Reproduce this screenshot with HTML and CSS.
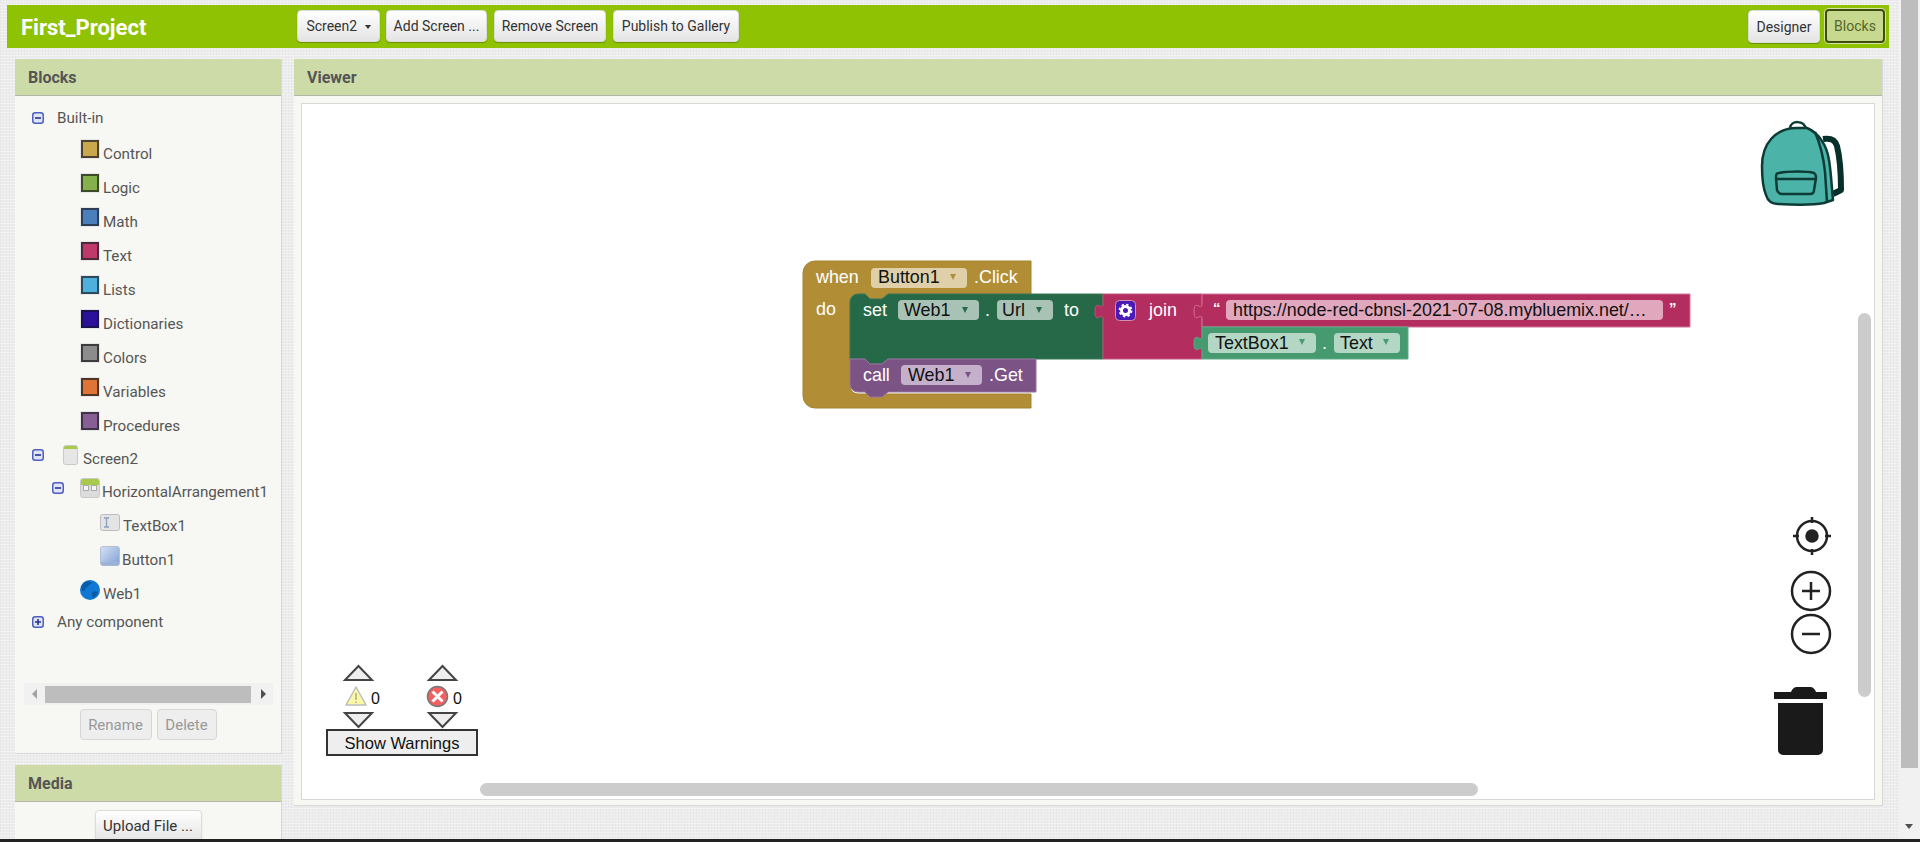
FILE: index.html
```html
<!DOCTYPE html>
<html>

<head>
	<title>First_Project - Blocks</title>
	<link rel="stylesheet" href="styles.css">
</head>

<body>
	<svg class="defs">
		<symbol id="minus" viewBox="0 0 12 12">
			<rect x="0.75" y="0.75" width="10.5" height="10.5" rx="2.5" fill="#dfe4f7" stroke="#4f5fc0" stroke-width="1.5" />
			<path d="M3 6h6" stroke="#27328f" stroke-width="1.6" />
		</symbol>
		<symbol id="plus" viewBox="0 0 12 12">
			<rect x="0.75" y="0.75" width="10.5" height="10.5" rx="2.5" fill="#dfe4f7" stroke="#4f5fc0" stroke-width="1.5" />
			<path d="M3 6h6M6 3v6" stroke="#27328f" stroke-width="1.6" />
		</symbol>
	</svg>

	<div class="window">
		<div class="page">
			<div class="topbar">
				<div class="project">First_Project</div>
				<div class="toolbar">
					<button class="btn btn-screen">Screen2 <span class="caret"></span></button>
					<button class="btn btn-add">Add Screen ...</button>
					<button class="btn btn-remove">Remove Screen</button>
					<button class="btn btn-publish">Publish to Gallery</button>
				</div>
				<div class="views">
					<button class="btn btn-designer">Designer</button>
					<button class="btn btn-active">Blocks</button>
				</div>
			</div>

			<div class="columns">
				<div class="sidebar">
					<div class="panel blocks-panel">
						<div class="panel-head">Blocks</div>
						<div class="tree">
							<div class="row row-builtin"><svg class="toggle"><use href="#minus" /></svg><span class="root-label">Built-in</span></div>
							<div class="row row-drawer"><span class="swatch control"></span>Control</div>
							<div class="row row-drawer"><span class="swatch logic"></span>Logic</div>
							<div class="row row-drawer"><span class="swatch math"></span>Math</div>
							<div class="row row-drawer"><span class="swatch text"></span>Text</div>
							<div class="row row-drawer"><span class="swatch lists"></span>Lists</div>
							<div class="row row-drawer"><span class="swatch dicts"></span>Dictionaries</div>
							<div class="row row-drawer"><span class="swatch colors"></span>Colors</div>
							<div class="row row-drawer"><span class="swatch vars"></span>Variables</div>
							<div class="row row-drawer"><span class="swatch procs"></span>Procedures</div>
							<div class="row row-screen">
								<svg class="toggle"><use href="#minus" /></svg>
								<svg class="icon icon-screen" viewBox="0 0 15 20">
									<rect x="0.5" y="0.5" width="14" height="19" rx="2" fill="#e6e6e6" stroke="#c9c9c9" />
									<path d="M1 4V2.5a1.5 1.5 0 0 1 1.500-1.500h10a1.500 1.500 0 0 1 1.500 1.500V4z" fill="#a9c94a" />
								</svg>
								Screen2
							</div>
							<div class="row row-arrange">
								<svg class="toggle"><use href="#minus" /></svg>
								<svg class="icon" viewBox="0 0 20 20">
									<rect x="0.5" y="0.5" width="19" height="19" rx="2.500" fill="#dcdcdc" stroke="#c9c9c9" />
									<path d="M1 7V3a2 2 0 0 1 2-2h14a2 2 0 0 1 2 2v4z" fill="#a9c94a" />
									<rect x="3.500" y="7.500" width="5" height="5" fill="#f4f4f4" stroke="#aaa" />
									<rect x="11.500" y="7.500" width="5" height="5" fill="#f4f4f4" stroke="#aaa" />
								</svg>
								HorizontalArrangement1
							</div>
							<div class="row row-child">
								<svg class="icon icon-textbox" viewBox="0 0 20 17">
									<rect x="0.5" y="0.5" width="19" height="16" rx="2" fill="#e4e4e4" stroke="#bdbdbd" />
									<path d="M4 4h5M4 13h5M6.500 4v9" fill="none" stroke="#8b9dc0" stroke-width="1.300" />
								</svg>
								TextBox1
							</div>
							<div class="row row-child">
								<svg class="icon" viewBox="0 0 20 20">
									<defs>
										<linearGradient id="btnfill" x1="0" y1="0" x2="1" y2="1">
											<stop offset="0" stop-color="#d6e2f6" />
											<stop offset="1" stop-color="#7e9fd3" />
										</linearGradient>
									</defs>
									<rect x="0.5" y="0.5" width="19" height="19" rx="2.500" fill="url(#btnfill)" stroke="#b3bfd2" />
									<path d="M1 16h18v1.500a2 2 0 0 1-2 2H3a2 2 0 0 1-2-2z" fill="#9db2d6" />
								</svg>
								Button1
							</div>
							<div class="row row-web">
								<svg class="icon" viewBox="0 0 20 20">
									<circle cx="10" cy="10" r="10" fill="#0f78d2" />
									<path d="M4 2.500c3-1.500 6-1.500 8 0-1 2-3 2-4 4-1 1-3 1-3 3s-2 1-3 1c-1-3 0-6 2-8zM12 12c2-1 4-1 6 0-1 3-3 5-5 6-1-1-1-4-1-6z" fill="#0a5aa8" />
								</svg>
								Web1
							</div>
							<div class="row row-any"><svg class="toggle"><use href="#plus" /></svg><span class="root-label">Any component</span></div>
						</div>
						<div class="hscroll">
							<span class="arrow-left"></span>
							<span class="hscroll-thumb"></span>
							<span class="arrow-right"></span>
						</div>
						<div class="panel-actions">
							<button class="btn btn-off btn-rename">Rename</button>
							<button class="btn btn-off btn-delete">Delete</button>
						</div>
					</div>

					<div class="panel media-panel">
						<div class="panel-head">Media</div>
						<div class="media-body">
							<button class="btn btn-upload">Upload File ...</button>
						</div>
					</div>
				</div>

				<div class="panel viewer-panel">
					<div class="panel-head">Viewer</div>
					<div class="viewer-body">
						<svg class="workspace" viewBox="302 104 1572 695">
							<!-- when Button1.Click -->
							<path class="blk gold" d="M803 273a12 12 0 0 1 12-12H1031V294H888l-6 5h-12l-5-5H858a8 8 0 0 0-8 8V386a8 8 0 0 0 8 8H1031V408H815a12 12 0 0 1-12-12z" />
							<rect class="field" x="871" y="268" width="96" height="20" rx="4" fill="#dfd0a9" />
							<text class="lbl" x="816" y="283">when</text>
							<text class="val" x="878" y="283">Button1</text>
							<path d="M950 274h6l-3 6z" fill="#b18e35" />
							<text class="lbl" x="974" y="283">.Click</text>
							<text class="lbl" x="816" y="315">do</text>

							<!-- set Web1.Url to -->
							<path class="blk green" d="M858 294H865l5 5h12l6-5H1103V359H888l-6 5h-12l-5-5H850V302a8 8 0 0 1 8-8z" />
							<text class="lbl" x="863" y="316">set</text>
							<rect class="field" x="898" y="300" width="81" height="20" rx="4" fill="#a8c3b5" />
							<text class="val" x="904" y="316">Web1</text>
							<path d="M962 307h6l-3 6z" fill="#266948" />
							<text class="lbl" x="985" y="316">.</text>
							<rect class="field" x="997" y="300" width="56" height="20" rx="4" fill="#a8c3b5" />
							<text class="val" x="1002" y="316">Url</text>
							<path d="M1036 307h6l-3 6z" fill="#266948" />
							<text class="lbl" x="1064" y="316">to</text>

							<!-- call Web1.Get -->
							<path class="blk purple" d="M850 359H865l5 5h12l6-5H1036V392H888l-6 5h-12l-5-5H858a8 8 0 0 1-8-8z" />
							<text class="lbl" x="863" y="381">call</text>
							<rect class="field" x="901" y="365" width="81" height="20" rx="4" fill="#c4b0ca" />
							<text class="val" x="908" y="381">Web1</text>
							<path d="M965 372h6l-3 6z" fill="#7c5385" />
							<text class="lbl" x="989" y="381">.Get</text>

							<!-- join -->
							<path class="blk pink" d="M1103 294H1202V359H1103V319c0-8-8 6-8-7.500s8 .5 8-7.500z" />
							<rect x="1115.500" y="300.500" width="20" height="20" rx="4" fill="#4a19b8" stroke="#d58fb0" />
							<circle cx="1125.500" cy="310.500" r="4" fill="none" stroke="#fff" stroke-width="3" />
							<circle cx="1125.500" cy="310.500" r="6" fill="none" stroke="#fff" stroke-width="1.800" stroke-dasharray="2.400 2.300" />
							<text class="lbl" x="1149" y="316">join</text>

							<!-- text string -->
							<path class="blk pink-text" d="M1202 294H1690V327H1202V319c0-8-8 6-8-7.500s8 .5 8-7.500z" />
							<text class="quote" x="1213" y="313">“</text>
							<rect class="field" x="1226" y="300" width="437" height="20" rx="4" fill="#e0a7bd" />
							<text class="val" x="1233" y="316">https://node-red-cbnsl-2021-07-08.mybluemix.net/…</text>
							<text class="quote" x="1669" y="313">”</text>

							<!-- TextBox1.Text -->
							<path class="blk teal" d="M1202 327H1408V359H1202V351c0-8-8 6-8-7.500s8 .5 8-7.500z" />
							<rect class="field" x="1208" y="333" width="108" height="20" rx="4" fill="#b4d6c5" />
							<text class="val" x="1215" y="349">TextBox1</text>
							<path d="M1299 339h6l-3 6z" fill="#459a6f" />
							<text class="lbl" x="1322" y="349">.</text>
							<rect class="field" x="1334" y="333" width="66" height="20" rx="4" fill="#b4d6c5" />
							<text class="val" x="1340" y="349">Text</text>
							<path d="M1383 339h6l-3 6z" fill="#459a6f" />

							<!-- warnings -->
							<g class="tri">
								<path d="M345 680l13.500-14 13.500 14z" />
								<path d="M429 680l13.500-14 13.500 14z" />
								<path d="M345 713l13.500 14 13.500-14z" />
								<path d="M429 713l13.500 14 13.500-14z" />
							</g>
							<path d="M356 687l10 18h-20z" fill="#fbf9a6" stroke="#bdbdbd" stroke-width="1.500" stroke-linejoin="round" />
							<path d="M356 693v7M356 701.500v1.500" stroke="#a3a37a" stroke-width="1.300" />
							<text class="count" x="371" y="704">0</text>
							<circle cx="437.500" cy="696.500" r="10" fill="#f46060" stroke="#777" stroke-width="1.500" />
							<path d="M432.500 691.500l10 10M442.500 691.500l-10 10" stroke="#fff" stroke-width="3" />
							<text class="count" x="453" y="704">0</text>
							<rect x="327" y="730" width="150" height="25" fill="#eee" stroke="#333" stroke-width="2" />
							<text class="warn-label" x="402" y="749">Show Warnings</text>

							<!-- backpack -->
							<g class="pack">
								<path class="pack-strap" d="M1823 139c7-1 12 0 14 7 3 12 4 30 4 44l-8 4" />
								<path class="pack-loop" d="M1790 128c1-8 14-8 16 1" />
								<path class="pack-body" d="M1797 128c-22 0-35 16-35 38 0 12 1 22 4 29 2 7 6 9 12 9 18 1 36 1 46-1l9-3c-1-10-2-28-4-40-2-14-10-27-22-32z" />
								<path class="pack-line" d="M1815 132c6 14 9 30 10 40l2 30" />
								<path class="pack-pocket" d="M1779 173c10-2 28-2 35 0 2 1 2 3 2 5l-2 12c0 3-2 4-4 4h-28c-3 0-4-1-5-4l-1-12c0-3 0-5 3-5zM1777 179h39" />
							</g>

							<!-- zoom controls -->
							<g class="ctrl">
								<circle cx="1812" cy="536" r="15" />
								<path d="M1812 517v6M1812 549v6M1793 536h6M1825 536h6" />
								<circle class="ctrl-dot" cx="1812" cy="536" r="5.500" />
								<circle cx="1811" cy="591" r="19" />
								<path d="M1802 591h18M1811 582v18" />
								<circle cx="1811" cy="634" r="19" />
								<path d="M1802 634h18" />
							</g>
							<path class="trash" d="M1774 692h17c1-3 3-5 6-5h13c3 0 5 2 6 5h11v7h-53zM1778 703h45v47a5 5 0 0 1-5 5h-35a5 5 0 0 1-5-5z" />

							<!-- scrollbars -->
							<rect class="ws-bar" x="1858" y="313" width="13" height="384" rx="6.500" />
							<rect class="ws-bar" x="480" y="783" width="998" height="13" rx="6.500" />
						</svg>
					</div>
				</div>
			</div>
		</div>

		<div class="vscroll">
			<div class="vscroll-thumb"></div>
			<div class="vscroll-arrow"></div>
		</div>
	</div>
	<div class="taskbar"></div>
</body>

</html>
```

FILE: styles.css
```css
* {
	box-sizing: border-box;
}

html,
body {
	margin: 0;
	height: 842px;
	overflow: hidden;
}

body {
	font-family: Roboto, "Liberation Sans", sans-serif;
	font-size: 14px;
	color: #555;
	background-color: #ececec;
}

.defs {
	display: none;
}

.window {
	display: flex;
	height: 839px;
	overflow: hidden;
}

.taskbar {
	height: 3px;
	background: #222;
}

.page {
	width: 1899px;
	padding: 5px 10px 0 7px;
	background-color: #ececec;
	background-image:
		repeating-linear-gradient(0deg, rgba(255, 255, 255, 0.35) 0 1px, transparent 1px 3px),
		repeating-linear-gradient(90deg, rgba(0, 0, 0, 0.025) 0 1px, transparent 1px 3px);
}

/* top bar */
.topbar {
	display: flex;
	align-items: center;
	height: 43px;
	padding: 2px 4px 0 14px;
	background-color: #8fc202;
}

.project {
	width: 276px;
	font-size: 22px;
	font-weight: 700;
	color: #fff;
}

.toolbar {
	display: flex;
	gap: 7px;
	margin-top: -3px;
}

.views {
	display: flex;
	align-items: flex-end;
	gap: 5px;
	margin-left: auto;
	margin-top: -3px;
}

.btn {
	height: 32px;
	padding: 0;
	font-family: Roboto, "Liberation Sans", sans-serif;
	font-size: 14px;
	color: #333;
	background: linear-gradient(#fff, #e4e4e4);
	border: 1px solid #dcdcdc;
	border-radius: 4px;
	box-shadow: 0 1px 1px rgba(0, 0, 0, 0.25);
}

.btn-screen {
	width: 83px;
	margin-right: -1px;
}

.btn-add {
	width: 101px;
}

.btn-remove {
	width: 112px;
}

.btn-publish {
	width: 126px;
}

.btn-designer {
	width: 72px;
	height: 33px;
}

.btn-active {
	width: 60px;
	height: 34px;
	color: #55662a;
	background: #c7d98f;
	border: 2px solid #3f4f0b;
	box-shadow: 0 0 0 1px #d6e3a8;
}

.caret {
	display: inline-block;
	margin-left: 4px;
	vertical-align: 2px;
	border-left: 3px solid transparent;
	border-right: 3px solid transparent;
	border-top: 4px solid #333;
}

/* panels */
.columns {
	display: flex;
	gap: 12px;
	margin: 11px 7px 0 0;
	padding-left: 8px;
}

.sidebar {
	display: flex;
	flex-direction: column;
	gap: 11px;
	width: 267px;
	flex: none;
}

.panel {
	background: #f7f8f3;
	border-right: 1px solid #d8d8d8;
	border-bottom: 1px solid #d8d8d8;
}

.panel-head {
	height: 37px;
	padding-left: 13px;
	font-size: 16px;
	font-weight: 700;
	line-height: 38px;
	color: #555;
	background: #ccdba8;
	border-bottom: 1px solid #b4b4a8;
}

.blocks-panel {
	height: 695px;
}

/* component tree */
.tree {
	height: 587px;
	padding-top: 5px;
	font-size: 15.2px;
}

.row {
	display: flex;
	align-items: center;
	height: 34px;
}

.row-builtin {
	margin-bottom: 1px;
}

.row-drawer {
	padding: 2px 0 0 66px;
}

.row-screen {
	padding-left: 17px;
}

.row-arrange {
	margin-top: -1px;
	padding-left: 37px;
}

.row-child {
	padding-left: 85px;
}

.row-web {
	padding-left: 65px;
}

.row-any {
	height: 26px;
	margin-top: -2px;
}

.toggle {
	width: 12px;
	height: 12px;
	flex: none;
	margin-left: 17px;
}

.row-screen .toggle,
.row-arrange .toggle {
	margin: 0 0 8px;
}

.root-label {
	margin-left: 13px;
}

.swatch {
	width: 18px;
	height: 18px;
	flex: none;
	margin: 0 4px 10px 0;
	border: 2px solid #3b3b3b;
	outline: 1px solid #e6e6e6;
}

.control { background: #c9a74d; border-color: #4a4130; }
.logic { background: #84b14c; border-color: #3c4a2a; }
.math { background: #4a7fbc; border-color: #2c3e55; }
.text { background: #c0396b; border-color: #4a2a3a; }
.lists { background: #4eb0dc; border-color: #2b4a5c; }
.dicts { background: #2b119a; border-color: #1c1450; }
.colors { background: #8c8c8c; border-color: #3c3c3c; }
.vars { background: #df7436; border-color: #4e3526; }
.procs { background: #875f95; border-color: #3f3146; }

.icon {
	width: 20px;
	height: 20px;
	flex: none;
	margin: 0 2px 8px 0;
}

.row-screen .icon {
	width: 15px;
	margin: 0 5px 8px 19px;
}

.row-arrange .icon {
	margin-left: 16px;
}

.icon-textbox {
	height: 17px;
	margin-right: 3px;
}

.row-web .icon {
	margin-right: 3px;
}

.hscroll {
	display: flex;
	align-items: center;
	height: 22px;
	margin: 0 8px 0 9px;
	background: #f1f1f1;
}

.hscroll-thumb {
	width: 206px;
	height: 17px;
	background: #bdbdbd;
}

.arrow-left,
.arrow-right {
	width: 0;
	height: 0;
	border-top: 5px solid transparent;
	border-bottom: 5px solid transparent;
}

.arrow-left {
	margin: 0 8px 0 8px;
	border-right: 5px solid #a3a3a3;
}

.arrow-right {
	margin-left: 10px;
	border-left: 5px solid #505050;
}

.panel-actions {
	display: flex;
	justify-content: center;
	gap: 5px;
	margin-top: 4px;
}

.btn-off {
	height: 31px;
	font-size: 15px;
	color: #999;
	background: #eee;
	border: 1px solid #d6d6d6;
	box-shadow: none;
}

.btn-rename {
	width: 72px;
}

.btn-delete {
	width: 60px;
}

.media-panel {
	height: 120px;
}

.media-body {
	display: flex;
	justify-content: center;
	padding-top: 8px;
}

.btn-upload {
	width: 107px;
	font-size: 15px;
}

/* viewer */
.viewer-panel {
	flex: 1;
	height: 747px;
}

.viewer-body {
	padding: 8px;
}

.workspace {
	display: block;
	width: 1572px;
	height: 695px;
	background: #fff;
	outline: 1px solid #d8d8d8;
}

.blk {
	stroke-width: 1;
}

.gold { fill: #b18e35; stroke: #a58330; }
.green { fill: #266948; stroke: #3b7858; }
.purple { fill: #7c5385; stroke: #96749d; }
.pink { fill: #b32d5e; stroke: #c2527a; }
.pink-text { fill: #b32d5e; stroke: #d2749a; }
.teal { fill: #459a6f; stroke: #5fa985; }

.workspace text {
	font-family: "Liberation Sans", Arial, sans-serif;
	font-size: 17.9px;
}

.workspace .lbl {
	fill: #fff;
}

.workspace .val {
	fill: #111;
}

.workspace .quote {
	font-size: 15px;
	font-weight: 700;
	fill: #fff;
}

.workspace .count {
	font-size: 16px;
	fill: #111;
}

.workspace .warn-label {
	font-size: 16.5px;
	text-anchor: middle;
	fill: #111;
}

.tri path {
	fill: #eee;
	stroke: #444;
	stroke-width: 2;
}

.pack path {
	fill: none;
	stroke: #0d3b36;
	stroke-width: 2.500;
	stroke-linejoin: round;
}

.pack .pack-body {
	fill: #4bb3a7;
}

.pack .pack-strap {
	stroke: #08302b;
	stroke-width: 6;
}

.ctrl circle {
	fill: #fff;
	stroke: #222;
	stroke-width: 2.500;
}

.ctrl path {
	fill: none;
	stroke: #222;
	stroke-width: 2.500;
}

.ctrl .ctrl-dot {
	fill: #222;
}

.trash {
	fill: #1a1a1a;
}

.ws-bar {
	fill: #ccc;
}

/* page scrollbar */
.vscroll {
	position: relative;
	width: 21px;
	background: #f1f1f1;
}

.vscroll-thumb {
	width: 17px;
	height: 768px;
	margin-left: 2px;
	background: #bdbdbd;
}

.vscroll-arrow {
	position: absolute;
	left: 6px;
	top: 824px;
	border-left: 4.500px solid transparent;
	border-right: 4.500px solid transparent;
	border-top: 5px solid #505050;
}
```
